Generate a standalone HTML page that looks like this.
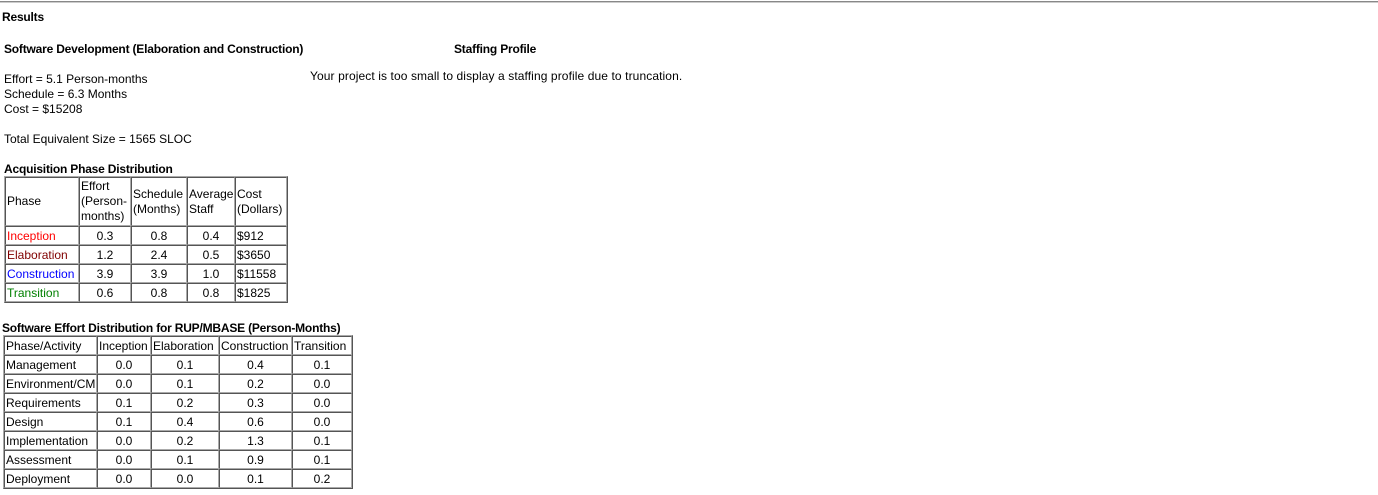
<!DOCTYPE html>
<html><head><style>
body{margin:0;width:1378px;height:495px;position:relative;background:#fff;font-family:"Liberation Sans",Arial,sans-serif;font-size:12px;color:#000;overflow:hidden}
.a{position:absolute;white-space:nowrap}
b{font-size:12px;letter-spacing:-0.2px}
table{position:absolute;border-collapse:separate;border-spacing:0;border:1px solid;border-color:#aaa #555 #555 #aaa;table-layout:fixed;font-size:12px}
td{border:1px solid;border-color:#555 #aaa #aaa #555;padding:0 1px;height:19px;box-sizing:border-box;line-height:16px;overflow:hidden;white-space:nowrap}
.c{text-align:center}
</style></head><body>
<div class="a" style="left:0;top:1px;width:1378px;height:1px;background:#888"></div>
<div class="a" style="left:0;top:2px;width:1378px;height:1px;background:#ccc"></div>
<div class="a" style="left:2px;top:10px"><b>Results</b></div>
<div class="a" style="left:4px;top:42px"><b>Software Development (Elaboration and Construction)</b></div>
<div class="a" style="left:454px;top:42px"><b>Staffing Profile</b></div>
<div class="a" style="left:310px;top:69px;letter-spacing:0.1px">Your project is too small to display a staffing profile due to truncation.</div>
<div class="a" style="left:4px;top:72px;line-height:15px">Effort = 5.1 Person-months<br>Schedule = 6.3 Months<br>Cost = $15208<br><br>Total Equivalent Size = 1565 SLOC</div>
<div class="a" style="left:4px;top:162px"><b>Acquisition Phase Distribution</b></div>
<table style="left:4px;top:176px;width:284px">
<colgroup><col style="width:74px"><col style="width:52px"><col style="width:56px"><col style="width:48px"><col style="width:52px"></colgroup>
<tr><td style="height:49px;line-height:15px">Phase</td><td style="line-height:15px">Effort<br>(Person-<br>months)</td><td style="line-height:15px">Schedule<br>(Months)</td><td style="line-height:15px">Average<br>Staff</td><td style="line-height:15px">Cost<br>(Dollars)</td></tr>
<tr><td style="color:#f00">Inception</td><td class="c">0.3</td><td class="c">0.8</td><td class="c">0.4</td><td>$912</td></tr>
<tr><td style="color:#800000">Elaboration</td><td class="c">1.2</td><td class="c">2.4</td><td class="c">0.5</td><td>$3650</td></tr>
<tr><td style="color:#00f">Construction</td><td class="c">3.9</td><td class="c">3.9</td><td class="c">1.0</td><td>$11558</td></tr>
<tr><td style="color:#008000">Transition</td><td class="c">0.6</td><td class="c">0.8</td><td class="c">0.8</td><td>$1825</td></tr>
</table>
<div class="a" style="left:2px;top:321px"><b>Software Effort Distribution for RUP/MBASE (Person-Months)</b></div>
<table style="left:3px;top:335px;width:350px">
<colgroup><col style="width:93px"><col style="width:54px"><col style="width:68px"><col style="width:73px"><col style="width:60px"></colgroup>
<tr><td>Phase/Activity</td><td>Inception</td><td>Elaboration</td><td>Construction</td><td>Transition</td></tr>
<tr><td>Management</td><td class="c">0.0</td><td class="c">0.1</td><td class="c">0.4</td><td class="c">0.1</td></tr>
<tr><td>Environment/CM</td><td class="c">0.0</td><td class="c">0.1</td><td class="c">0.2</td><td class="c">0.0</td></tr>
<tr><td>Requirements</td><td class="c">0.1</td><td class="c">0.2</td><td class="c">0.3</td><td class="c">0.0</td></tr>
<tr><td>Design</td><td class="c">0.1</td><td class="c">0.4</td><td class="c">0.6</td><td class="c">0.0</td></tr>
<tr><td>Implementation</td><td class="c">0.0</td><td class="c">0.2</td><td class="c">1.3</td><td class="c">0.1</td></tr>
<tr><td>Assessment</td><td class="c">0.0</td><td class="c">0.1</td><td class="c">0.9</td><td class="c">0.1</td></tr>
<tr><td>Deployment</td><td class="c">0.0</td><td class="c">0.0</td><td class="c">0.1</td><td class="c">0.2</td></tr>
</table>
</body></html>
